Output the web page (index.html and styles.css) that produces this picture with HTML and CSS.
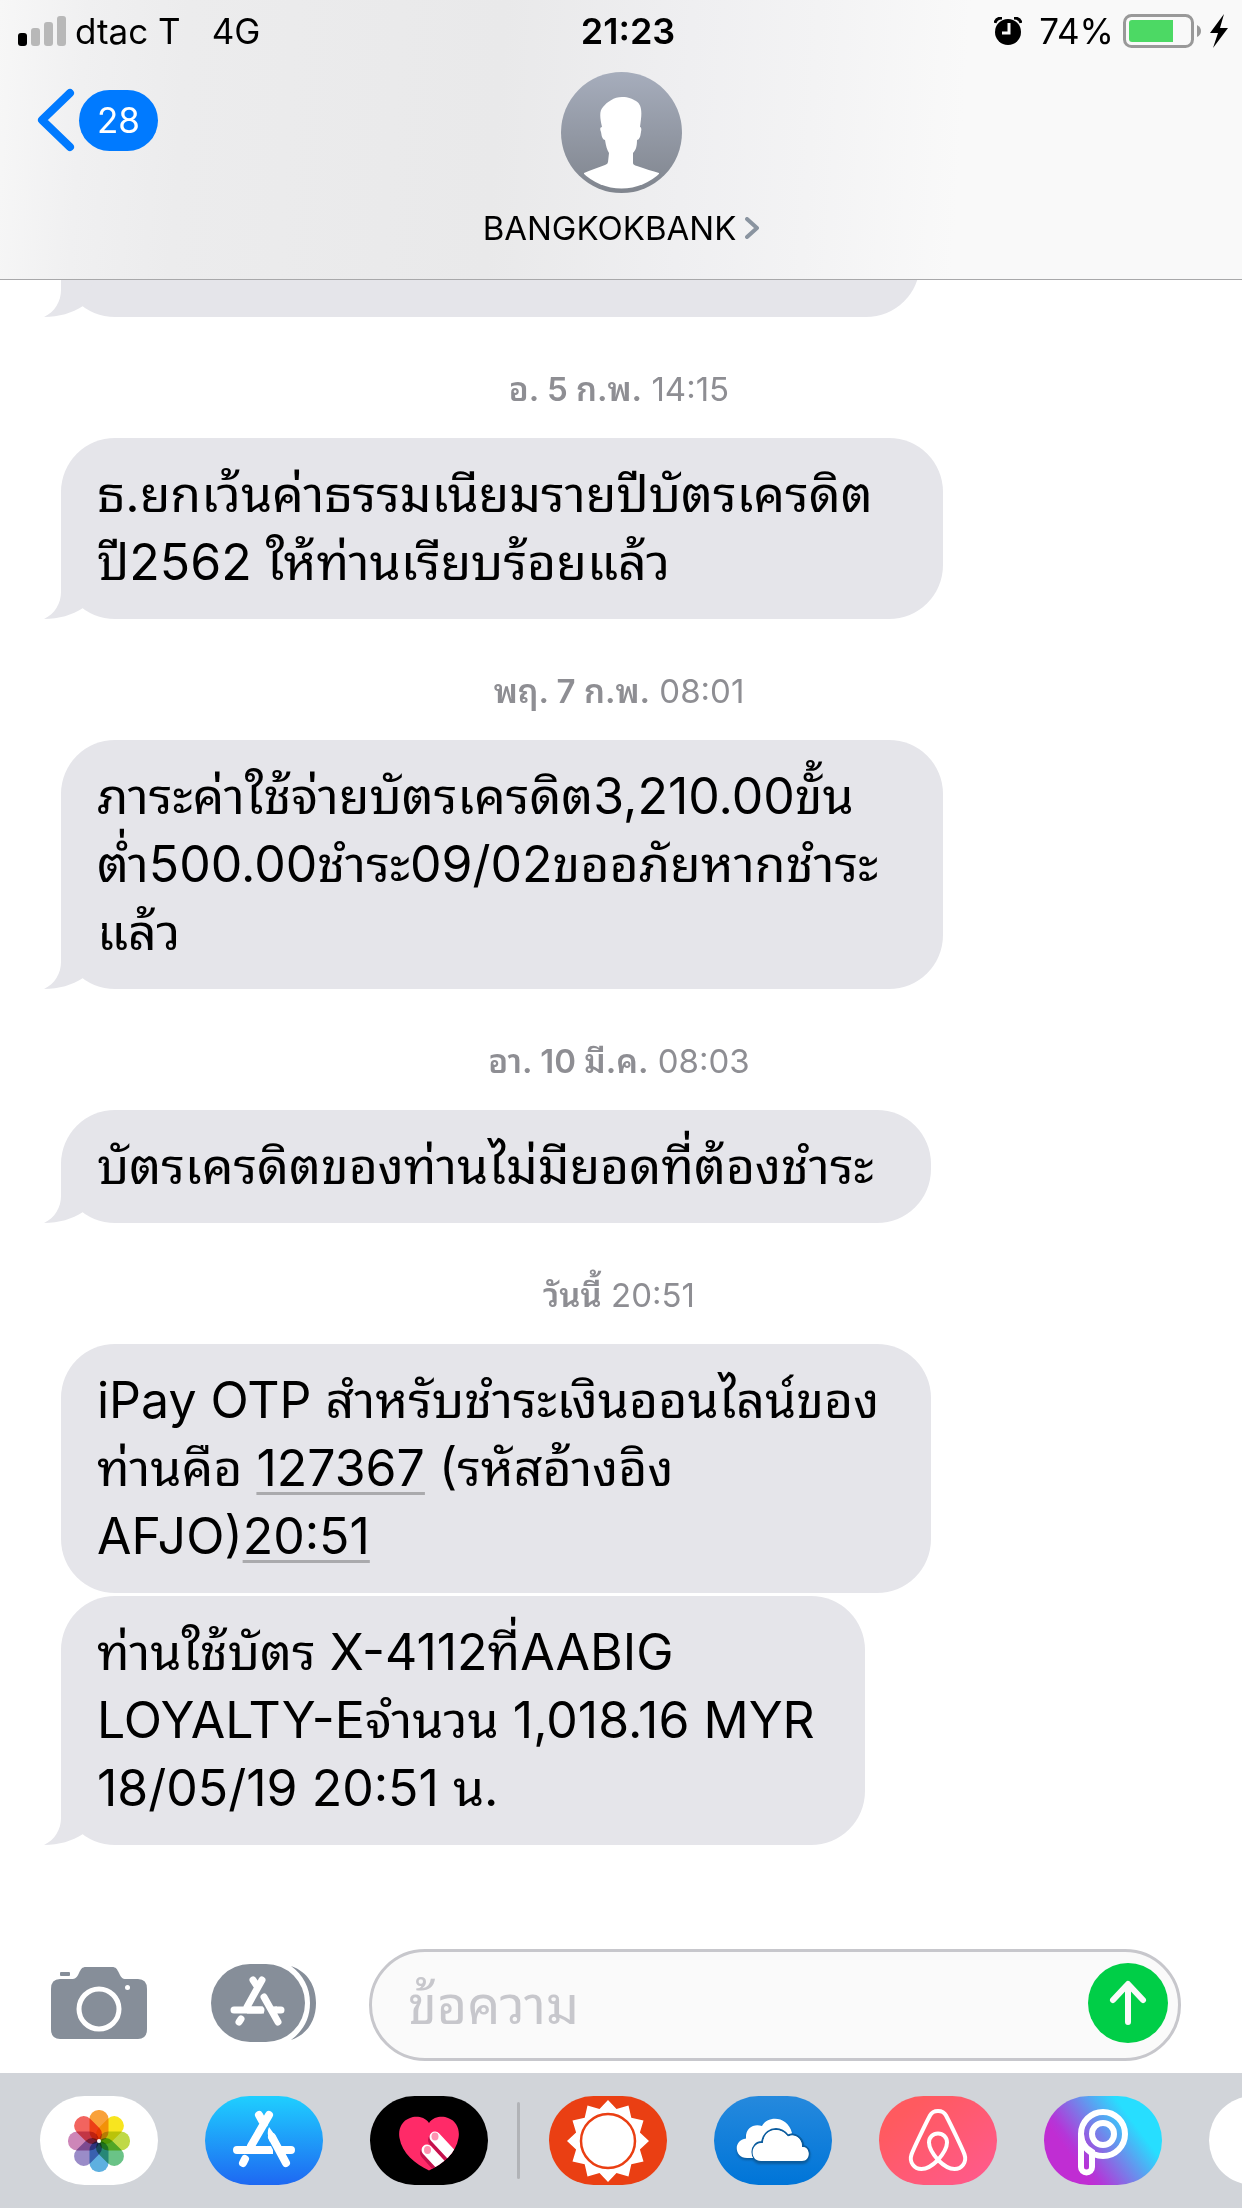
FILE: index.html
```html
<!DOCTYPE html>
<html lang="th">
	<head>
		<meta charset="UTF-8" />
		<meta name="viewport" content="width=device-width, initial-scale=1.0" />
		<title>BANGKOKBANK</title>
		<link rel="stylesheet" href="styles.css">
	</head>

	<body>
		<header class="header">
			<div class="status">
				<div class="status-left">
					<svg class="signal" width="48" height="30" viewBox="0 0 48 30">
						<rect x="0" y="17" width="9" height="13" rx="3" />
						<rect x="13" y="12" width="9" height="18" rx="3" fill="#b8b8b8" />
						<rect x="26" y="6" width="9" height="24" rx="3" fill="#b8b8b8" />
						<rect x="39" y="0" width="9" height="30" rx="3" fill="#b8b8b8" />
					</svg>
					<span>dtac T</span>
					<span class="network">4G</span>
				</div>
				<div class="time">21:23</div>
				<div class="status-right">
					<svg width="28" height="28" viewBox="0 0 28 28">
						<circle cx="14" cy="15" r="13" />
						<path d="M1 6 Q2 1 8 1 M27 6 Q26 1 20 1" fill="none" stroke="#000" stroke-width="3" />
						<path d="M15 6 V16 H8" fill="none" stroke="#f9f9f9" stroke-width="3" />
					</svg>
					<span class="percent">74%</span>
					<svg width="78" height="34" viewBox="0 0 78 34">
						<rect x="1.5" y="1.5" width="68" height="31" rx="7" fill="none" stroke="#999" stroke-width="3" />
						<path d="M9 6 H50 V28 H9 Q6 28 6 25 V9 Q6 6 9 6Z" fill="#4cd964" />
						<path d="M74 11 Q78 13 78 17 Q78 21 74 23Z" fill="#999" />
					</svg>
					<svg class="bolt" width="18" height="34" viewBox="0 0 18 34">
						<path d="M14 0 L0 19 H8 L3 34 L18 14 H10Z" />
					</svg>
				</div>
			</div>

			<div class="nav">
				<button class="back" aria-label="ย้อนกลับ">
					<svg width="38" height="64" viewBox="0 0 38 64">
						<path d="M33 5 L5 32 L33 59" fill="none" stroke="#007aff" stroke-width="8" stroke-linecap="round" stroke-linejoin="round" />
					</svg>
					<span class="count">28</span>
				</button>
				<button class="contact">
					<svg width="121" height="121" viewBox="0 0 121 121">
						<defs>
							<linearGradient id="avatarBg" x1="0" y1="0" x2="0" y2="1">
								<stop offset="0" stop-color="#a6adbc" />
								<stop offset="1" stop-color="#80858e" />
							</linearGradient>
							<clipPath id="avatarClip"><circle cx="60.5" cy="60.5" r="56" /></clipPath>
						</defs>
						<circle cx="60.5" cy="60.5" r="60.5" fill="url(#avatarBg)" />
						<path clip-path="url(#avatarClip)" fill="#fff" d="M61 25 C68 25 71 27 75 29 C80 32 81 38 80 47 L79 55 Q81 55 80 60 Q79 68 76 68 C76 74 75 78 72 81 V91 Q72 93 76 94 C84 97 92 99 98 101 V121 H23 V101 C29 98 37 96 44 93 Q47 92 47 90 L48 81 C46 78 45 74 44 68 Q41 68 40 60 Q38 55 41 55 C39 46 38 39 42 35 C46 30 53 25 61 25Z" />
					</svg>
					<span class="contact-name">BANGKOKBANK
						<svg width="14" height="22" viewBox="0 0 14 22">
							<path d="M2 2 L12 11 L2 20" fill="none" stroke="#8a94a0" stroke-width="4" stroke-linecap="round" stroke-linejoin="round" />
						</svg>
					</span>
				</button>
			</div>
		</header>

		<main class="chat">
			<div class="bubble tail previous"></div>
			<div class="date"><b>อ. 5 ก.พ.</b> 14:15</div>
			<div class="bubble tail wide">ธ.ยกเว้นค่าธรรมเนียมรายปีบัตรเครดิต<br>ปี2562 ให้ท่านเรียบร้อยแล้ว</div>
			<div class="date"><b>พฤ. 7 ก.พ.</b> 08:01</div>
			<div class="bubble tail wide">ภาระค่าใช้จ่ายบัตรเครดิต3,210.00ขั้น<br>ต่ำ500.00ชำระ09/02ขออภัยหากชำระ<br>แล้ว</div>
			<div class="date"><b>อา. 10 มี.ค.</b> 08:03</div>
			<div class="bubble tail medium">บัตรเครดิตของท่านไม่มียอดที่ต้องชำระ</div>
			<div class="date"><b>วันนี้</b> 20:51</div>
			<div class="bubble medium">iPay OTP สำหรับชำระเงินออนไลน์ของ<br>ท่านคือ <a href="#">127367</a> (รหัสอ้างอิง<br>AFJO)<a href="#">20:51</a></div>
			<div class="bubble tail">ท่านใช้บัตร X-4112ที่AABIG<br>LOYALTY-Eจำนวน 1,018.16 MYR<br>18/05/19 20:51 น.</div>
		</main>

		<form class="composer">
			<button type="button" class="tool camera" aria-label="กล้อง">
				<svg width="96" height="72" viewBox="0 0 96 72">
					<path fill="#868e99" d="M9 12 H20 C25 12 26 10 28 6 C30 2 31 0 35 0 H61 C65 0 66 2 68 6 C70 10 71 12 75 12 H87 Q96 12 96 22 V62 Q96 72 87 72 H9 Q0 72 0 62 V22 Q0 12 9 12Z" />
					<rect x="9" y="5" width="10" height="4" rx="1" fill="#868e99" />
					<circle cx="48" cy="42" r="20" fill="none" stroke="#fff" stroke-width="5" />
					<circle cx="76.5" cy="20.5" r="2.5" fill="#fff" />
				</svg>
			</button>
			<button type="button" class="tool apps" aria-label="แอพ">
				<svg width="105" height="78" viewBox="0 0 105 78">
					<rect width="94" height="78" rx="39" fill="#868e99" />
					<path fill="#868e99" d="M80 2 C97 8 105 22 105 39 C105 56 97 70 80 76 C92 67 99 55 99 39 C99 23 92 11 80 2Z" />
					<path fill="none" stroke="#fff" stroke-width="7" stroke-linecap="round" d="M51 16 L36 43 M42 16 L46 22 M23 46 H50 M65 46 H70 M53 33 L67 58 M30 55 L28 58" />
					<path fill="#fff" d="M36 42.500 H52 L53 49.500 H36Z M60 42.500 H66 V49.500 H64Z" />
				</svg>
			</button>
			<div class="field">
				<input type="text" class="message" aria-label="ข้อความ" placeholder="ข้อความ" />
				<button type="submit" class="send" aria-label="ส่ง">
					<svg width="80" height="80" viewBox="0 0 80 80">
						<circle cx="40" cy="40" r="40" fill="#00ce47" />
						<path d="M40 59 V22 M25 37 L40 21 L55 37" fill="none" stroke="#fafafa" stroke-width="6" stroke-linecap="round" stroke-linejoin="round" />
					</svg>
				</button>
			</div>
		</form>

		<nav class="strip">
			<a href="#" class="app" aria-label="รูปภาพ">
				<svg viewBox="0 0 118 89">
					<rect width="118" height="89" fill="#fff" />
					<g class="petals" transform="translate(59 45)">
						<rect x="-9.500" y="-31" width="19" height="31" rx="9" fill="#f9a13a" />
						<rect x="-9.500" y="-31" width="19" height="31" rx="9" fill="#f8e51f" transform="rotate(45)" />
						<rect x="-9.500" y="-31" width="19" height="31" rx="9" fill="#bfd947" transform="rotate(90)" />
						<rect x="-9.500" y="-31" width="19" height="31" rx="9" fill="#6ac387" transform="rotate(135)" />
						<rect x="-9.500" y="-31" width="19" height="31" rx="9" fill="#5eb0e0" transform="rotate(180)" />
						<rect x="-9.500" y="-31" width="19" height="31" rx="9" fill="#9a8cc8" transform="rotate(225)" />
						<rect x="-9.500" y="-31" width="19" height="31" rx="9" fill="#cd86b8" transform="rotate(270)" />
						<rect x="-9.500" y="-31" width="19" height="31" rx="9" fill="#f2645f" transform="rotate(315)" />
					</g>
					<circle cx="59" cy="45" r="2" fill="#fff" />
				</svg>
			</a>
			<a href="#" class="app" aria-label="App Store">
				<svg viewBox="0 0 118 89">
					<defs>
						<linearGradient id="storeBg" x1="0" y1="0" x2="0" y2="1">
							<stop offset="0" stop-color="#1fcfff" />
							<stop offset="1" stop-color="#1e68f2" />
						</linearGradient>
					</defs>
					<rect width="118" height="89" fill="url(#storeBg)" />
					<path fill="none" stroke="#fff" stroke-width="8" stroke-linecap="round" d="M64 19 L46 50 M54 19 L59 28 M32 54 H62 M78 54 H86 M67 41 L81 67 M40 63 L38 67" />
					<path fill="#fff" d="M44 50 H66 L68 54 V58 H44Z M73 50 H80 V58 H77Z M64 31 L70.500 40 L65 46 Q61 38 64 31Z" />
				</svg>
			</a>
			<a href="#" class="app" aria-label="Digital Touch">
				<svg viewBox="0 0 118 89">
					<defs>
						<clipPath id="heart">
							<path d="M59 27 C54 20 45 20 40 22 C31 25 28 34 29.500 42 C32 57 45 68 59 74.500 C73 68 86 57 88.500 42 C90 34 87 25 78 22 C73 20 64 20 59 27Z" />
						</clipPath>
					</defs>
					<rect width="118" height="89" />
					<g clip-path="url(#heart)">
						<rect width="118" height="89" fill="#ff2a68" />
						<path d="M64 44 L90 73 M56 57 L82 86" stroke="#c4124d" stroke-width="12" stroke-linecap="round" />
						<path d="M65 41 L91 69 M57 54 L83 82" stroke="#fff" stroke-width="11" stroke-linecap="round" />
						<ellipse cx="65" cy="40.500" rx="3.500" ry="4" fill="#ff92b1" />
						<ellipse cx="57.500" cy="54" rx="3.500" ry="4" fill="#ff92b1" />
					</g>
				</svg>
			</a>
			<span class="divider"></span>
			<a href="#" class="app" aria-label="AccuWeather">
				<svg viewBox="0 0 118 89">
					<rect width="118" height="89" fill="#ea3f13" />
					<g transform="translate(59 45)">
						<polygon fill="#fff" points="41,0 31.900,8.500 35.500,20.500 23.300,23.300 20.500,35.500 8.500,31.900 0,41 -8.500,31.900 -20.500,35.500 -23.300,23.300 -35.500,20.500 -31.900,8.500 -41,0 -31.900,-8.500 -35.500,-20.500 -23.300,-23.300 -20.500,-35.500 -8.500,-31.900 0,-41 8.500,-31.900 20.500,-35.500 23.300,-23.300 35.500,-20.500 31.900,-8.500" />
						<circle r="27" fill="none" stroke="#ea3f13" stroke-width="2.500" />
					</g>
				</svg>
			</a>
			<a href="#" class="app" aria-label="OneDrive">
				<svg viewBox="0 0 118 89">
					<defs>
						<linearGradient id="driveBg" x1="0" y1="0" x2="0" y2="1">
							<stop offset="0" stop-color="#2589dd" />
							<stop offset="1" stop-color="#0075d8" />
						</linearGradient>
					</defs>
					<rect width="118" height="89" fill="url(#driveBg)" />
					<g class="cloud" fill="#fff">
						<path d="M42 62 H33 C20 62 19 44 32 42.500 C31 32 40 27 48 30 C54 19 74 20 78 37 L60 60Z" />
						<path stroke="#0b5c9e" stroke-width="2" d="M47 65 C35 65 36 46 48 46 C50 36 57 33 62 33 C68 33 72 37 74 39.500 C81 36.500 89 42 89 50 C98 51 97 65 88 65Z" />
						<path d="M47 65 C35 65 36 46 49 47 C50 36 57 34 62 34 C68 34 72 38 74 40.500 C81 37.500 88 42 88 51 C97 51 97 65 88 65Z" />
					</g>
				</svg>
			</a>
			<a href="#" class="app" aria-label="Airbnb">
				<svg viewBox="0 0 118 89">
					<defs>
						<linearGradient id="bnbBg" x1="0" y1="0" x2="1" y2="1">
							<stop offset="0.200" stop-color="#ff5a5f" />
							<stop offset="1" stop-color="#ff5a90" />
						</linearGradient>
					</defs>
					<rect width="118" height="89" fill="url(#bnbBg)" />
					<path fill="none" stroke="#fff" stroke-width="4" d="M59 64 C53 57 50 52 50 46.500 C50 41 54 37.500 59 37.500 C64 37.500 68 41 68 46.500 C68 52 65 57 59 64 C53 70 48 73 42.500 73 C35 73 30 66 32.500 58.500 C34 54 46 29 51 19.500 C54 13.500 64 13.500 67 19.500 C72 29 84 54 85.500 58.500 C88 66 83 73 75.500 73 C70 73 65 70 59 64Z" />
				</svg>
			</a>
			<a href="#" class="app" aria-label="PicsArt">
				<svg viewBox="0 0 118 89">
					<defs>
						<linearGradient id="artBg" gradientUnits="userSpaceOnUse" x1="28" y1="62" x2="85" y2="20">
							<stop offset="0" stop-color="#c02dd3" />
							<stop offset="0.120" stop-color="#b436d8" />
							<stop offset="1" stop-color="#27deff" />
						</linearGradient>
					</defs>
					<rect width="118" height="89" fill="url(#artBg)" />
					<g fill="none" stroke="#fff" stroke-width="6">
						<circle cx="59" cy="38" r="22" />
						<circle cx="59" cy="38" r="11" />
						<path d="M37 38 V71 A5.500 5.500 0 0 0 48 71 V56 Q37 50 37 38" />
					</g>
				</svg>
			</a>
			<a href="#" class="app blank" aria-label="เพิ่มเติม"></a>
		</nav>
	</body>
</html>
```
FILE: styles.css
```css
* {
	box-sizing: border-box;
	margin: 0;
	padding: 0;
}

body {
	display: flex;
	flex-direction: column;
	height: 100vh;
	overflow: hidden;
	background: #fff;
	color: #000;
	font-family: Inter, Thonburi, "Noto Sans Thai Looped", "Noto Looped Thai", Loma, Garuda, Waree, "Noto Sans Thai", "Noto Sans", sans-serif;
}

button {
	border: none;
	background: none;
	font: inherit;
	color: inherit;
}

svg {
	display: block;
	flex: none;
}

.header {
	flex: none;
	height: 280px;
	border-bottom: 1px solid #a8a8aa;
	background: linear-gradient(94deg, #f7f7f7 0%, #f0f0f1 7%, #ececed 15%, #e9e9ea 40%, #efeff1 55%, #f3f3f4 65%, #f9f9f9 77%);
}

.status {
	display: grid;
	grid-template-columns: 1fr auto 1fr;
	align-items: center;
	height: 62px;
	padding: 0 4px 0 18px;
	font-size: 35px;
}

.status-left,
.status-right {
	display: flex;
	align-items: center;
	gap: 9px;
}

.status-right {
	justify-content: flex-end;
	padding-right: 10px;
}

.network {
	margin-left: 22px;
}

.time {
	font-size: 36px;
	font-weight: 600;
}

.percent {
	margin-left: 8px;
}

.nav {
	display: grid;
	grid-template-columns: 1fr auto 1fr;
	align-items: start;
	padding-top: 10px;
}

.back {
	display: flex;
	align-items: center;
	gap: 4px;
	justify-self: start;
	padding: 16px 0 0 37px;
}

.count {
	width: 79px;
	border-radius: 31px;
	background: #007aff;
	color: #fff;
	font-size: 35px;
	line-height: 61px;
	text-align: center;
}

.contact {
	display: flex;
	flex-direction: column;
	align-items: center;
	gap: 15px;
}

.contact-name {
	display: flex;
	align-items: center;
	gap: 9px;
	font-size: 33px;
	line-height: 40px;
}

.chat {
	flex: 1;
	display: flex;
	flex-direction: column;
	align-items: flex-start;
	justify-content: flex-end;
	min-height: 0;
	overflow: hidden;
	padding: 0 65px 80px 61px;
}

.date {
	align-self: center;
	flex: none;
	padding: 52px 0 29px;
	color: #8e8e93;
	font-size: 33px;
	line-height: 40px;
}

.date b {
	font-weight: 600;
}

.bubble {
	position: relative;
	flex: none;
	padding: 22px 50px 23px 36px;
	border-radius: 54px;
	background: #e5e5ea;
	font-size: 50px;
	line-height: 68px;
	white-space: nowrap;
}

.bubble + .bubble {
	margin-top: 3px;
}

.wide {
	width: 79%;
}

.medium {
	width: 78%;
}

.tail::before {
	content: "";
	position: absolute;
	left: -17px;
	bottom: 0;
	width: 60px;
	height: 60px;
	background: #e5e5ea;
	clip-path: path("M17 0 V33 C17 44 11 55 0 60 C15 60 28 56 39 49 L60 0 Z");
}

.previous {
	width: 77%;
	height: 113px;
}

.bubble a {
	color: inherit;
	text-decoration: underline;
	text-decoration-color: #aaaaad;
	text-decoration-thickness: 3px;
	text-underline-offset: 6px;
}

.composer {
	flex: none;
	display: flex;
	align-items: center;
	padding: 24px 61px 12px 51px;
}

.tool {
	flex: none;
	margin-bottom: 4px;
}

.camera {
	margin-right: 64px;
}

.apps {
	margin-right: 53px;
}

.field {
	flex: 1;
	display: flex;
	align-items: center;
	min-width: 0;
	height: 112px;
	padding: 0 10px 0 36px;
	border: 3px solid #c7c7cc;
	border-radius: 56px;
	background: #fafafa;
}

.message {
	flex: 1;
	min-width: 0;
	height: 100px;
	border: none;
	outline: 0;
	background: none;
	font: inherit;
	font-size: 52px;
}

.message::placeholder {
	color: #c7c7cc;
	opacity: 1;
}

.send {
	flex: none;
	margin-bottom: 4px;
}

.strip {
	flex: none;
	display: flex;
	align-items: center;
	gap: 47px;
	height: 135px;
	padding-left: 40px;
	overflow: hidden;
	background: #d1d4d9;
}

.app {
	flex: none;
	width: 118px;
	height: 89px;
	border-radius: 45px;
	overflow: hidden;
}

.petals {
	isolation: isolate;
}

.petals rect {
	mix-blend-mode: multiply;
}

.cloud {
	filter: drop-shadow(0 2px 1px #0b5c9e);
}

.blank {
	background: #fff;
}

.divider {
	flex: none;
	width: 3px;
	height: 77px;
	margin: 0 -18px;
	border-radius: 2px;
	background: #b1b3b7;
}
```
